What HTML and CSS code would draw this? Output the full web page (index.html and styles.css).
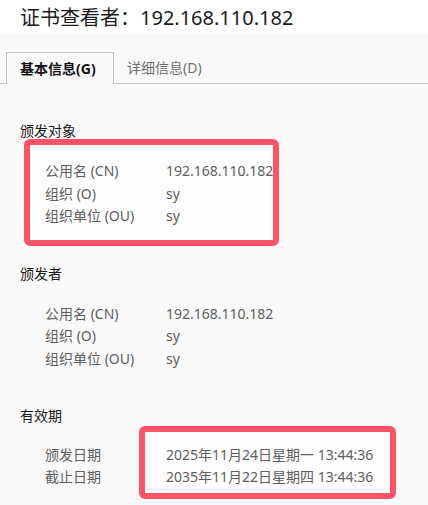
FILE: index.html
```html
<!DOCTYPE html>
<html lang="zh-CN">
<head>
<meta charset="utf-8">
<title>证书查看者</title>
<link rel="stylesheet" href="styles.css">
</head>
<body>
<div class="title">证书查看者：192.168.110.182</div>
<div class="panel">
  <div class="tabs">
    <div class="tab active">基本信息(G)</div>
    <div class="tab">详细信息(D)</div>
  </div>
  <div class="content">
    <section class="section">
      <h2 class="heading">颁发对象</h2>
      <div class="rows">
        <div class="row"><span class="label">公用名 (CN)</span><span class="value">192.168.110.182</span></div>
        <div class="row"><span class="label">组织 (O)</span><span class="value">sy</span></div>
        <div class="row"><span class="label">组织单位 (OU)</span><span class="value">sy</span></div>
      </div>
      <div class="mark mark-subject"></div>
    </section>
    <section class="section">
      <h2 class="heading">颁发者</h2>
      <div class="rows">
        <div class="row"><span class="label">公用名 (CN)</span><span class="value">192.168.110.182</span></div>
        <div class="row"><span class="label">组织 (O)</span><span class="value">sy</span></div>
        <div class="row"><span class="label">组织单位 (OU)</span><span class="value">sy</span></div>
      </div>
    </section>
    <section class="section">
      <h2 class="heading">有效期</h2>
      <div class="rows dates">
        <div class="row"><span class="label">颁发日期</span><span class="value">2025年11月24日星期一 13:44:36</span></div>
        <div class="row"><span class="label">截止日期</span><span class="value">2035年11月22日星期四 13:44:36</span></div>
      </div>
      <div class="mark mark-dates"></div>
    </section>
  </div>
</div>
</body>
</html>
```
FILE: styles.css
```css
* { box-sizing: border-box; }
html, body { margin: 0; padding: 0; }
body {
  width: 428px;
  height: 505px;
  overflow: hidden;
  background: #f9f9f9;
  font-family: "Noto Sans", "Noto Sans CJK SC", sans-serif;
  color: #1a1a1a;
}
.title {
  height: 34px;
  background: #ffffff;
  padding: 1px 0 0 20px;
  font-size: 20px;
  line-height: 34px;
  color: #1c1c1c;
  white-space: nowrap;
}
.panel {
  background: #f9f9f9;
  padding-top: 18px;
}
.tabs {
  display: flex;
  padding-left: 6px;
  border-bottom: 1px solid #c6c6c6;
  height: 32px;
}
.tab {
  height: 31px;
  padding: 0 13px;
  font-size: 14px;
  line-height: 31px;
  color: #6e6e6e;
  white-space: nowrap;
}
.tab.active {
  height: 32px;
  margin-bottom: -1px;
  background: #f9f9f9;
  border: 1px solid #c6c6c6;
  border-bottom: none;
  font-weight: 700;
  color: #111111;
  width: 108px;
}
.content {
  padding: 36px 0 0 20px;
}
.section {
  position: relative;
  margin-bottom: 35px;
}
.heading {
  margin: 0;
  font-size: 14px;
  font-weight: 400;
  line-height: 22px;
  color: #1a1a1a;
}
.rows {
  margin-top: 18px;
  padding-left: 25px;
  position: relative;
  z-index: 1;
}
.rows.dates { margin-top: 17px; }
.row {
  display: flex;
  font-size: 14px;
  line-height: 22.5px;
  color: #5e5e5e;
  white-space: nowrap;
}
.dates .row { line-height: 21.5px; }
.label { width: 121px; flex: none; }
.value { flex: none; }
.mark {
  position: absolute;
  border: 6px solid #ff5468;
  border-radius: 6px;
  background: #fdfdfd;
  pointer-events: none;
  z-index: 0;
}
.mark-subject {
  left: 4px;
  top: 19px;
  width: 255px;
  height: 107px;
}
.mark-dates {
  left: 119px;
  top: 21px;
  width: 257px;
  height: 73px;
}
```
